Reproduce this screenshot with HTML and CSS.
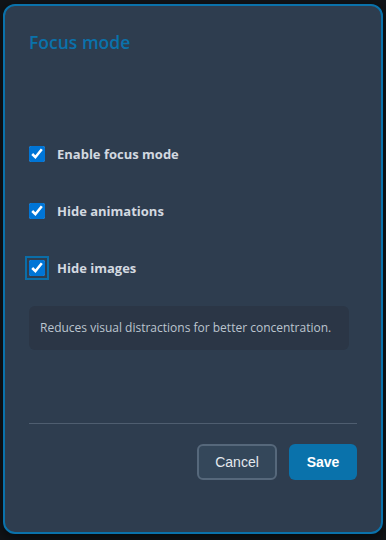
FILE: index.html
```html
<!DOCTYPE html>
<html lang="en">
<head>
    <meta charset="UTF-8">
    <meta name="viewport" content="width=device-width, initial-scale=1.0">
    <title>Focus mode</title>
    <link rel="stylesheet" href="styles.css">
</head>
<body>
    <div class="dialog">
        <h2 class="dialog-title">Focus mode</h2>

        <div class="options">
            <label class="option">
                <input type="checkbox" checked>
                <span>Enable focus mode</span>
            </label>
            <label class="option">
                <input type="checkbox" checked>
                <span>Hide animations</span>
            </label>
            <label class="option">
                <input type="checkbox" class="focused" checked>
                <span>Hide images</span>
            </label>
        </div>

        <div class="hint">Reduces visual distractions for better concentration.</div>

        <div class="actions">
            <button class="btn btn-cancel">Cancel</button>
            <button class="btn btn-save">Save</button>
        </div>
    </div>
</body>
</html>
```

FILE: styles.css
```css
body {
    margin: 0;
    padding: 4px 3px 6px 3px;
    background-color: #111418;
    font-family: "Segoe UI", "Open Sans", "Noto Sans", sans-serif;
    box-sizing: border-box;
    height: 540px;
}

.dialog {
    box-sizing: border-box;
    height: 530px;
    background-color: #2e3d4f;
    border: 2px solid #0a72ab;
    border-radius: 12px;
    padding: 24px 24px 0 24px;
    display: flex;
    flex-direction: column;
    box-shadow: 0 4px 14px rgba(0, 0, 0, 0.6);
}

.dialog-title {
    margin: 0;
    font-size: 17.5px;
    font-weight: 600;
    color: #0a72ab;
    line-height: 24px;
}

.options {
    margin-top: 88px;
    display: flex;
    flex-direction: column;
    gap: 33px;
}

.option {
    display: flex;
    align-items: center;
    gap: 12px;
    font-size: 13px;
    font-weight: 700;
    color: #d3d9e0;
    line-height: 24px;
}

.option input {
    width: 16px;
    height: 16px;
    margin: 0;
    accent-color: #0075d6;
}

.option input.focused {
    outline: 2px solid #0a6ea8;
    outline-offset: 2px;
}

.hint {
    margin-top: 26px;
    margin-right: 8px;
    padding: 13px 11px;
    background-color: #2b3646;
    border-radius: 6px;
    font-size: 12px;
    color: #bcc5cf;
    line-height: 18px;
    white-space: nowrap;
}

.actions {
    margin-top: 73px;
    border-top: 1px solid #4f5e70;
    padding-top: 20px;
    display: flex;
    justify-content: flex-end;
    gap: 12px;
}

.btn {
    height: 36px;
    border-radius: 6px;
    font-family: "Liberation Sans", Arial, sans-serif;
    font-size: 14px;
    padding: 0;
    cursor: pointer;
}

.btn-cancel {
    background-color: #34475a;
    border: 2px solid #56687b;
    color: #e4e9ee;
    width: 80px;
}

.btn-save {
    background-color: #0a72ab;
    border: none;
    color: #ffffff;
    font-weight: 700;
    width: 68px;
}
```
